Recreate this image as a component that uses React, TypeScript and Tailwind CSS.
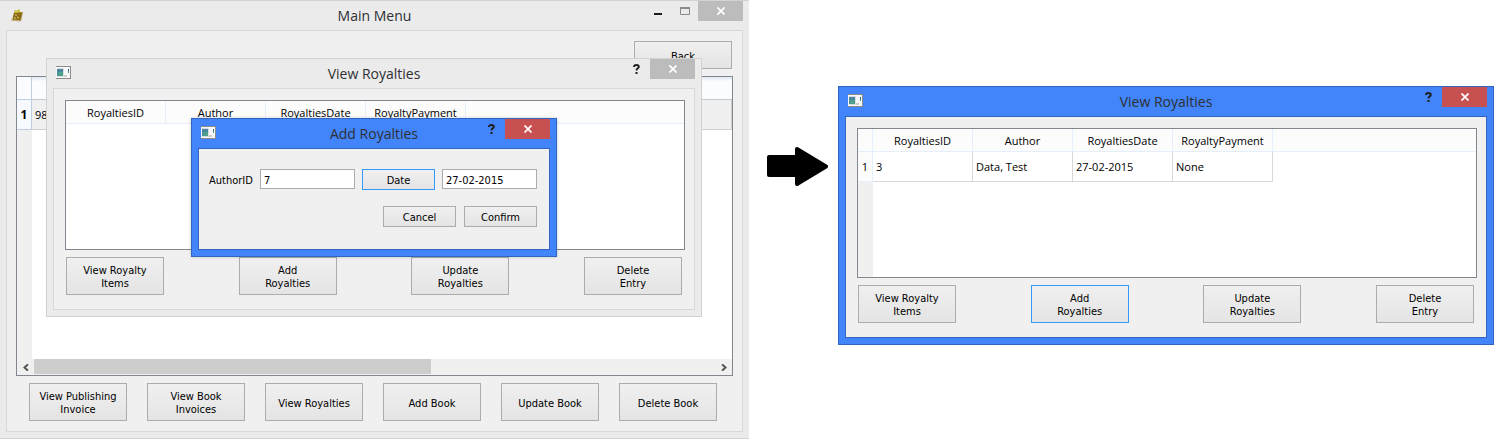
import React from "react";

const uiFont = "font-['DejaVu_Sans_Condensed','DejaVu_Sans',sans-serif]";

function FormIcon() {
  return (
    <svg className="block h-[13px] w-[16px]" viewBox="0 0 16 13" aria-hidden="true">
      <rect x="0" y="0" width="15" height="13" fill="#8b8b8b" />
      <rect x="0" y="1" width="14" height="11" fill="#fafafa" />
      <rect x="1" y="2" width="7" height="9" fill="#d9dde6" />
      <rect x="1" y="3" width="6" height="7" fill="#4b86a0" />
      <rect x="2" y="6" width="5" height="4" fill="#4fa08a" />
      <rect x="8" y="9" width="3" height="2" fill="#cfcfcf" />
      <rect x="12" y="3" width="1" height="4" fill="#2f5f8f" />
      <rect x="12" y="5" width="1" height="2" fill="#3f9a6a" />
    </svg>
  );
}

function BookIcon() {
  return (
    <svg className="block h-[13px] w-[13px]" viewBox="0 0 13 13" aria-hidden="true">
      <path d="M3 4 L4 1 L6 2 L8 0 L9 3 L12 3 L10 12 L1 11 Z" fill="#a88d35" />
      <path d="M4 1 L6 2 L8 0 L9 3 L4 4 Z" fill="#cfc83c" />
      <path d="M3 4 L11 4 L9 11 L2 10 Z" fill="#8a6a14" />
      <path d="M4 6 L6 6 M6 8 L8 9 M3 9 L5 9" stroke="#d9c98a" strokeWidth="1" />
      <path d="M0 11 L9 12" stroke="#b9a878" strokeWidth="1" />
    </svg>
  );
}

function CloseButton({ active }: { active: boolean }) {
  return (
    <button
      type="button"
      aria-label="Close"
      className={`flex h-5 w-[45px] items-center justify-center ${active ? "bg-[#c75050]" : "bg-[#bcbcbc]"}`}
    >
      <svg className="h-2 w-2" viewBox="0 0 8 8" aria-hidden="true">
        <path d="M0.5 0.5 L7.5 7.5 M7.5 0.5 L0.5 7.5" stroke="#fff" strokeWidth="1.7" />
      </svg>
    </button>
  );
}

type WindowProps = {
  title: string;
  active?: boolean;
  main?: boolean;
  children: React.ReactNode;
};

function Window({ title, active = false, main = false, children }: WindowProps) {
  const frame = active
    ? "border bg-[#4284fa] border-[#3464c2]"
    : main
      ? "border-y bg-[#ebebeb] border-[#d2d2d2]"
      : "border bg-[#ebebeb] border-[#d2d2d2]";
  return (
    <section aria-label={title} className={`flex flex-col px-1.5 pb-1.5 ${frame}`}>
      <header className="grid h-[29px] grid-cols-[1fr_auto_1fr] items-start">
        <div className={main ? "pt-2 pl-[5px]" : "pt-[7px] pl-[3px]"}>{main ? <BookIcon /> : <FormIcon />}</div>
        <h2 className="text-[14px] leading-[30px] text-[#2e3033]">{title}</h2>
        <div className="flex justify-end">
          {main ? (
            <>
              <button type="button" aria-label="Minimize" className="flex h-[21px] w-7 items-center justify-center">
                <svg className="h-[9px] w-[10px]" viewBox="0 0 10 9" aria-hidden="true">
                  <rect x="1" y="6" width="8" height="2" fill="#1c1c1c" />
                </svg>
              </button>
              <button type="button" aria-label="Maximize" className="flex h-[21px] w-[26px] items-center justify-center">
                <svg className="h-[9px] w-[10px]" viewBox="0 0 10 9" aria-hidden="true">
                  <path d="M0.5 1 V7.5 H9.5 V1" fill="none" stroke="#8a8a8a" />
                  <rect x="0" y="0" width="10" height="2" fill="#8a8a8a" />
                </svg>
              </button>
            </>
          ) : (
            <button type="button" aria-label="Help" className="flex h-5 w-[28px] items-center justify-center">
              <svg className="h-[10px] w-[7px]" viewBox="0 0 7 10" aria-hidden="true">
                <path
                  d="M1 3 V2.2 Q1.4 1 3.4 1 Q5.8 1 5.8 2.8 Q5.8 3.8 4.6 4.4 Q3.5 5 3.5 6.6"
                  fill="none"
                  stroke="#1e1e1e"
                  strokeWidth="1.9"
                />
                <rect x="2.5" y="8" width="2" height="2" fill="#1e1e1e" />
              </svg>
            </button>
          )}
          <CloseButton active={active} />
        </div>
      </header>
      <div className={`border bg-[#f0f0f0] ${active ? "border-[#3464c2]" : "border-[#d8d8d8]"}`}>{children}</div>
    </section>
  );
}

type ButtonProps = { children: React.ReactNode; size: string; focused?: boolean };

function PushButton({ children, size, focused = false }: ButtonProps) {
  return (
    <button
      type="button"
      className={`border bg-gradient-to-b from-[#f0f0f0] to-[#e4e4e4] pt-0.5 text-[11px] leading-[13px] text-black ${uiFont} ${size} ${focused ? "border-[#3399ff]" : "border-[#acacac]"}`}
    >
      {children}
    </button>
  );
}

const wide = "h-[38px] w-[98px]";
const small = "h-[21px] w-[73px]";
const columns = ["RoyaltiesID", "Author", "RoyaltiesDate", "RoyaltyPayment"];

function RoyaltiesWindow({ active = false, rows }: { active?: boolean; rows: string[][] }) {
  const numbered = rows.length > 0;
  const line = "border-r border-b border-[#e5effb]";
  return (
    <Window title="View Royalties" active={active}>
      <div className="pt-[11px] pr-[9px] pb-[14px] pl-[11px]">
        <div className="h-[150px] overflow-hidden border border-[#828790] bg-white">
          <table className="h-full w-full table-fixed border-separate border-spacing-0 text-[11px] leading-[15px] text-black">
            <colgroup>
              {numbered && <col className="w-[15px]" />}
              <col className="w-[100px]" />
              <col className="w-[100px]" />
              <col className="w-[100px]" />
              <col className="w-[100px]" />
              <col />
            </colgroup>
            <thead>
              <tr className="h-[23px] bg-[#fcfcfc]">
                {numbered && <td className={`p-0 ${line}`} />}
                {columns.map((c) => (
                  <th key={c} scope="col" className={`p-0 font-normal ${line}`}>
                    {c}
                  </th>
                ))}
                <td className="border-b border-[#e5effb] p-0" />
              </tr>
            </thead>
            <tbody>
              {rows.map((row, i) => (
                <tr key={i} className="h-[30px]">
                  <th scope="row" className={`bg-[#fcfcfc] p-0 font-normal ${line}`}>
                    {i + 1}
                  </th>
                  {row.map((cell, j) => (
                    <td key={j} className="border-r border-b border-[#d8d8d8] p-0 pl-[3px]">
                      {cell}
                    </td>
                  ))}
                  <td className="p-0" />
                </tr>
              ))}
              <tr>
                {numbered && <td className="bg-[#f0f0f0] p-0" />}
                <td colSpan={5} className="p-0" />
              </tr>
            </tbody>
          </table>
        </div>
        <div className="mt-[7px] mr-[3px] ml-px flex justify-between">
          <PushButton size={wide}>
            View Royalty
            <br />
            Items
          </PushButton>
          <PushButton size={wide} focused={active}>
            Add
            <br />
            Royalties
          </PushButton>
          <PushButton size={wide}>
            Update
            <br />
            Royalties
          </PushButton>
          <PushButton size={wide}>
            Delete
            <br />
            Entry
          </PushButton>
        </div>
      </div>
    </Window>
  );
}

function AddRoyaltiesDialog() {
  const field = `h-5 min-w-0 flex-1 border border-[#abadb3] bg-white px-[3px] pt-0.5 text-[11px] text-black outline-none ${uiFont}`;
  return (
    <Window title="Add Royalties" active>
      <form className="pt-5 pr-3 pb-[22px] pl-2.5" onSubmit={(e) => e.preventDefault()}>
        <div className="flex items-start gap-[7px]">
          <label htmlFor="author-id" className={`w-11 text-[11px] leading-6 whitespace-nowrap text-black h-5 ${uiFont}`}>
            AuthorID
          </label>
          <input id="author-id" className={field} defaultValue="7" />
          <PushButton size={small} focused>
            Date
          </PushButton>
          <input aria-label="Date" className={field} defaultValue="27-02-2015" />
        </div>
        <div className="mt-4 flex justify-end gap-2">
          <PushButton size={small}>Cancel</PushButton>
          <PushButton size={small}>Confirm</PushButton>
        </div>
      </form>
    </Window>
  );
}

function MainMenu() {
  return (
    <Window title="Main Menu" main>
      <div className="px-[9px] pt-2.5 pb-2.5">
        <div className="flex justify-end pr-px">
          <PushButton size="h-7 w-[98px]">Back</PushButton>
        </div>
        <div className="mt-[7px] flex h-[300px] flex-col border border-[#828790] bg-white">
          <table className="w-full flex-1 table-fixed border-separate border-spacing-0 text-[11px] leading-[15px] text-black">
            <colgroup>
              <col className="w-[15px]" />
              <col />
            </colgroup>
            <tbody>
              <tr className="h-[23px] bg-[#fafcfe]">
                <td className="border-r border-b border-[#c0cde0] p-0" />
                <td className="border-b border-[#c0c8d4] bg-gradient-to-b from-[#dfe9f2] to-[#fafcfe] to-20% p-0" />
              </tr>
              <tr className="h-[30px]">
                <th scope="row" className="border-r border-b border-[#c0cde0] bg-[#f6fafe] p-0 text-[12px] font-bold">
                  1
                </th>
                <td className="border-r border-b border-[#d0d0d0] bg-[#f0f0f0] p-0 pl-[3px]">98</td>
              </tr>
              <tr>
                <td className="bg-[#f0f0f0] p-0" />
                <td className="p-0" />
              </tr>
            </tbody>
          </table>
          <div className="flex h-4 items-stretch bg-[#f0f0f0]">
            <button type="button" aria-label="Scroll left" className="flex w-[17px] items-center justify-center">
              <svg className="h-[7px] w-[6px]" viewBox="0 0 6 7" aria-hidden="true">
                <path d="M5 0.3 L1.5 3.5 L5 6.7" fill="none" stroke="#555" strokeWidth="2" />
              </svg>
            </button>
            <div className="flex flex-1">
              <div className="h-[15px] w-[58.3%] bg-[#cdcdcd]" />
            </div>
            <button type="button" aria-label="Scroll right" className="flex w-[17px] items-center justify-center">
              <svg className="h-[7px] w-[6px]" viewBox="0 0 6 7" aria-hidden="true">
                <path d="M1 0.3 L4.5 3.5 L1 6.7" fill="none" stroke="#555" strokeWidth="2" />
              </svg>
            </button>
          </div>
        </div>
        <div className="mt-[7px] mr-4 ml-[13px] flex justify-between">
          <PushButton size={wide}>
            View Publishing
            <br />
            Invoice
          </PushButton>
          <PushButton size={wide}>
            View Book
            <br />
            Invoices
          </PushButton>
          <PushButton size={wide}>View Royalties</PushButton>
          <PushButton size={wide}>Add Book</PushButton>
          <PushButton size={wide}>Update Book</PushButton>
          <PushButton size={wide}>Delete Book</PushButton>
        </div>
      </div>
    </Window>
  );
}

export default function App() {
  return (
    <main className="grid grid-cols-[749fr_89fr_656fr_16fr] items-start bg-white font-['Open_Sans','Noto_Sans',sans-serif]">
      <div className="relative">
        <MainMenu />
        <div className="absolute top-[58px] right-[47px] left-[46px]">
          <RoyaltiesWindow rows={[]} />
        </div>
        <div className="absolute top-[118px] left-[191px] w-[366px] shadow-[0_0_3px_rgba(0,0,0,0.2)]">
          <AddRoyaltiesDialog />
        </div>
      </div>
      <svg className="mt-[147px] ml-[18px] h-[39px] w-[61px]" viewBox="0 0 61 39" role="img" aria-label="Leads to">
        <path
          d="M2 10 H30 V2 L59 19.5 L30 37 V28 H2 Z"
          fill="#000"
          stroke="#000"
          strokeWidth="4"
          strokeLinejoin="round"
        />
      </svg>
      <div className="pt-[86px]">
        <RoyaltiesWindow active rows={[["3", "Data, Test", "27-02-2015", "None"]]} />
      </div>
    </main>
  );
}
